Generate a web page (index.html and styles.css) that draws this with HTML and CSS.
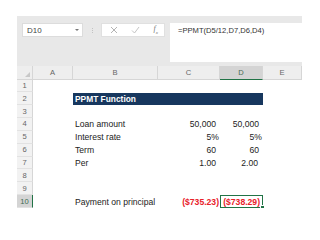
FILE: index.html
```html
<!DOCTYPE html>
<html>
<head>
<meta charset="utf-8">
<link rel="stylesheet" href="styles.css">
</head>
<body>
<div class="app">
  <div class="fbar">
    <div class="namebox"><span>D10</span><span class="caret"></span></div>
    <div class="sep"><i></i><i></i><i></i></div>
    <div class="btns">
      <svg width="8" height="8" viewBox="0 0 8 8"><path d="M1 1L7 7M7 1L1 7" stroke="#b4b4b4" stroke-width="1"/></svg>
      <svg width="9" height="8" viewBox="0 0 9 8"><path d="M1 4.5L3.5 7L8 1" stroke="#c4c4c4" stroke-width="1" fill="none"/></svg>
      <span class="fx">f<sub>x</sub></span>
    </div>
    <div class="formula">=PPMT(D5/12,D7,D6,D4)</div>
  </div>
  <div class="grid">
    <div class="ch corner"><span class="tri"></span></div>
    <div class="ch">A</div>
    <div class="ch">B</div>
    <div class="ch">C</div>
    <div class="ch sel">D</div>
    <div class="ch">E</div>

    <div class="rh">1</div><div></div><div></div><div></div><div></div><div></div>
    <div class="rh">2</div><div></div><div class="title">PPMT Function</div><div></div>
    <div class="rh">3</div><div></div><div></div><div></div><div></div><div></div>
    <div class="rh">4</div><div></div><div class="lbl">Loan amount</div><div class="num">50,000</div><div class="num">50,000</div><div></div>
    <div class="rh">5</div><div></div><div class="lbl">Interest rate</div><div class="num pct">5%</div><div class="num pct">5%</div><div></div>
    <div class="rh">6</div><div></div><div class="lbl">Term</div><div class="num">60</div><div class="num">60</div><div></div>
    <div class="rh">7</div><div></div><div class="lbl">Per</div><div class="num">1.00</div><div class="num d2">2.00</div><div></div>
    <div class="rh">8</div><div></div><div></div><div></div><div></div><div></div>
    <div class="rh">9</div><div></div><div></div><div></div><div></div><div></div>
    <div class="rh sel">10</div><div></div><div class="lbl">Payment on principal</div><div class="num neg c">($735.23)</div><div class="num neg active">($738.29)</div><div></div>
  </div>
</div>
</body>
</html>
```
FILE: styles.css
```css
html, body { margin: 0; padding: 0; background: #fff; }
body { font-family: "Liberation Sans", Arial, sans-serif; }
.app { padding: 16px 0 0 17px; width: 285px; }
.fbar {
  background: #e8e8e8;
  height: 50px;
  display: flex;
  align-items: flex-start;
  padding: 7px 0 0 5px;
  box-sizing: border-box;
}
.namebox {
  width: 61px; height: 14px; background: #fff;
  border: 1px solid #dcdcdc; box-sizing: border-box;
  display: flex; align-items: center; justify-content: space-between;
  padding: 0 3px 0 4px; font-size: 8px; color: #444;
}
.caret { width: 0; height: 0; border-left: 2px solid transparent; border-right: 2px solid transparent; border-top: 2px solid #777; }
.sep { width: 18px; height: 14px; display: flex; flex-direction: column; align-items: center; justify-content: center; gap: 1px; }
.sep i { width: 1px; height: 1px; background: #c2c2c2; display: block; }
.btns {
  width: 64px; height: 14px; background: #fff; border: 1px solid #e0e0e0; box-sizing: border-box;
  display: flex; align-items: center; justify-content: space-between; padding: 0 6px 0 8px;
}
.fx { font-family: "Liberation Serif", serif; font-style: italic; font-size: 8px; color: #777; line-height: 1; }
.fx sub { font-size: 5px; }
.formula {
  margin-left: 5px; flex: 1; height: 39px; background: #fff;
  font-size: 7.6px; color: #333; padding: 3px 0 0 8px; box-sizing: border-box;
}
.grid {
  display: grid;
  grid-template-columns: 16px 40px 85px 62px 43px 39px;
  grid-template-rows: 13.5px;
  grid-auto-rows: 12.85px;
  font-size: 8.6px;
  color: #222;
}
.ch {
  background: #eeeeee; color: #666; font-size: 7.6px;
  display: flex; align-items: center; justify-content: center;
  border-right: 1px solid #d6d6d6; border-bottom: 1px solid #d6d6d6; box-sizing: border-box;
}
.ch.sel { background: #d4d4d4; color: #4a6a55; border-bottom: 1px solid #217346; }
.corner { position: relative; }
.tri { position: absolute; right: 2px; bottom: 2px; width: 0; height: 0; border-left: 5px solid transparent; border-bottom: 5px solid #c8c8c8; }
.rh {
  background: #f2f2f2; color: #666; font-size: 7.6px;
  display: flex; align-items: center; justify-content: center;
  border-right: 1px solid #d6d6d6; border-bottom: 1px solid #e2e2e2; box-sizing: border-box;
}
.rh.sel { background: #d4d4d4; color: #3d6b4f; border-right: 1px solid #217346; }
.title {
  grid-column: span 3; background: #17375e; color: #fff; font-weight: bold;
  display: flex; align-items: center; padding-left: 2px; font-size: 8.4px;
  margin-top: 0.5px;
}
.lbl { display: flex; align-items: center; padding-left: 2px; white-space: nowrap; }
.num { display: flex; align-items: center; justify-content: flex-end; padding-right: 4px; white-space: nowrap; }
.num.pct { padding-right: 1px; }
.num.d2 { padding-right: 5px; }
.neg { color: #e8202a; font-weight: bold; }
.neg.c { padding-right: 1px; }
.active {
  position: relative; padding-right: 3px;
  outline: 1.5px solid #217346; outline-offset: -1.5px;
}
.active::after {
  content: ""; position: absolute; right: -2px; bottom: -2px;
  width: 3px; height: 3px; background: #217346; border: 1px solid #fff;
}
```
